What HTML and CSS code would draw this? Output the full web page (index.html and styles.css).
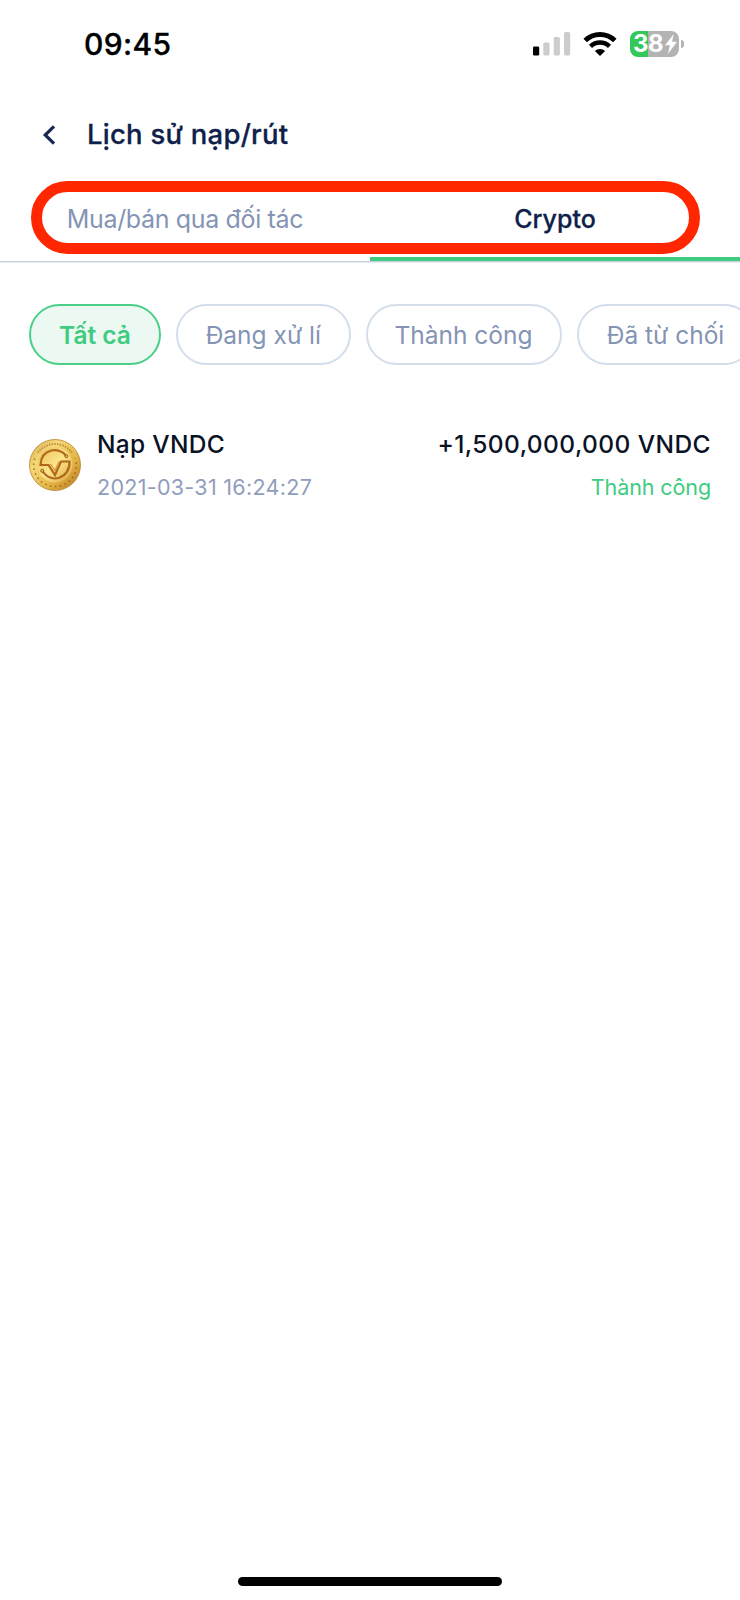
FILE: index.html
```html
<!DOCTYPE html>
<html lang="vi">
<head>
<meta charset="utf-8">
<title>Lịch sử nạp/rút</title>
<link rel="stylesheet" href="styles.css">
</head>
<body>
<div class="screen">
  <header class="status">
    <span class="time">09:45</span>
    <svg class="signal" width="38" height="24" viewBox="0 0 38 24">
      <rect x="0" y="14.500" width="6.200" height="9" rx="1.300" fill="#000"/>
      <rect x="10.300" y="10.500" width="6.200" height="13" rx="1.600" fill="#ccc"/>
      <rect x="20.700" y="5" width="6.200" height="18.500" rx="1.600" fill="#ccc"/>
      <rect x="31" y="0" width="6.200" height="23.500" rx="1.600" fill="#ccc"/>
    </svg>
    <svg class="wifi" width="34" height="24" viewBox="0 0 34 24">
      <path d="M2.200 8.500C10.500.5 23.500.5 31.800 8.500" fill="none" stroke="#000" stroke-width="5"/>
      <path d="M7.500 14.300C12.900 9.200 21.100 9.200 26.500 14.300" fill="none" stroke="#000" stroke-width="4.500"/>
      <path d="M17 24L11.900 18.900C14.700 16.200 19.300 16.200 22.100 18.900Z" fill="#000"/>
    </svg>
    <div class="battery">
      <div class="cell"><span class="pct">38</span>
        <svg class="bolt" width="12" height="20" viewBox="0 0 12 20"><path d="M8.800 0L0 11.300H5L2.800 20L12 7.800H7Z" fill="#fff"/></svg>
      </div>
      <i class="nub"></i>
    </div>
  </header>
  <div class="titlebar">
    <svg class="back" width="14" height="20" viewBox="0 0 14 20"><path d="M12 1.300L3.200 10L12 18.700" fill="none" stroke="#172751" stroke-width="3.200"/></svg>
    <h1 class="title">Lịch sử nạp/rút</h1>
  </div>
  <nav class="tabs">
    <div class="tab">Mua/bán qua đối tác</div>
    <div class="tab active">Crypto</div>
    <div class="ring"></div>
  </nav>
  <div class="pills">
    <div class="pill p1">Tất cả</div>
    <div class="pill p2">Đang xử lí</div>
    <div class="pill p3">Thành công</div>
    <div class="pill p4">Đã từ chối</div>
  </div>
  <main class="row">
    <svg class="coin" width="52" height="52" viewBox="0 0 52 52">
      <defs>
        <linearGradient id="gold" x1="0" y1="0" x2="1" y2="1">
          <stop offset="0" stop-color="#d9a548"/><stop offset=".3" stop-color="#f6da78"/><stop offset=".65" stop-color="#e3b344"/><stop offset="1" stop-color="#b3721c"/>
        </linearGradient>
        <linearGradient id="face" x1="0" y1="0" x2="1" y2="1">
          <stop offset="0" stop-color="#e9bb52"/><stop offset=".5" stop-color="#fbe58c"/><stop offset="1" stop-color="#dca23a"/>
        </linearGradient>
      </defs>
      <circle cx="26" cy="26" r="25.500" fill="url(#gold)" stroke="#b8822f" stroke-width=".8"/>
      <path d="M5.800 19.500A21.300 21.300 0 1 0 46.200 19.500" fill="none" stroke="#8d5a1a" stroke-width="1.600" stroke-dasharray="1.600 3.400" opacity=".75"/>
      <path d="M9 13.500A21.200 21.200 0 0 1 43 13.500" fill="none" stroke="#9a6824" stroke-width="2" stroke-dasharray="1.500 1.200" opacity=".6"/>
      <circle cx="26" cy="26" r="17.500" fill="url(#face)"/>
      <path d="M37 16.500C31 8 12.500 8.500 11.500 26H19.500L26 36L32 22.500H40.500C41.500 38 23 46.500 13.500 32" fill="none" stroke="#b0681a" stroke-width="2.200"/>
      <path d="M21.500 25L26 31.500L30 22.500" fill="none" stroke="#dc9a38" stroke-width="1.300"/>
      <circle cx="37.400" cy="17.200" r="1.500" fill="#e9bb52" stroke="#965a17"/>
      <circle cx="13.200" cy="31.800" r="1.500" fill="#e9bb52" stroke="#965a17"/>
    </svg>
    <div class="left"><div class="name">Nạp VNDC</div><div class="date">2021-03-31 16:24:27</div></div>
    <div class="right"><div class="amount">+1,500,000,000 VNDC</div><div class="state">Thành công</div></div>
  </main>
  <div class="home"></div>
</div>
</body>
</html>
```
FILE: styles.css
```css
* { box-sizing: border-box; }
body { margin: 0; background: #fff; font-family: Inter, "Noto Sans", sans-serif; }
.screen { width: 740px; height: 1600px; overflow: hidden; display: flex; flex-direction: column; background: #fff; white-space: nowrap; }

.status { display: flex; align-items: center; height: 88px; padding-left: 84px; flex: none; }
.time { width: 449px; font-size: 30px; font-weight: 500; line-height: 40px; letter-spacing: 0.35px; color: #000; -webkit-text-stroke: 0.3px #000; }
.signal { margin-right: 12px; }
.wifi { margin: -1px 13px 0 0; }
.battery { display: flex; align-items: center; gap: 2px; }
.cell { display: flex; align-items: center; gap: 1px; width: 49px; height: 26px; padding-left: 3px; border-radius: 8px; background: linear-gradient(90deg, #34c759 18px, #b3b3b3 18px); }
.pct { width: 31px; font-size: 24px; font-weight: 700; line-height: 26px; color: #fff; letter-spacing: -0.5px; }
.nub { width: 3px; height: 8px; border-radius: 0 4px 4px 0; background: #b3b3b3; }

.titlebar { display: flex; align-items: center; height: 92px; padding: 1px 0 0 42px; flex: none; }
.title { margin: -2px 0 0 31px; font-size: 27.500px; font-weight: 500; line-height: 40px; letter-spacing: 0.25px; color: #0f1f4b; -webkit-text-stroke: 0.3px #0f1f4b; }

.tabs { position: relative; display: grid; grid-template-columns: 1fr 1fr; height: 82px; flex: none; border-bottom: 1px solid #c5d2e2; box-shadow: 0 1px #e6edf4; }
.tab { height: 81px; font-size: 25px; line-height: 78px; letter-spacing: -0.35px; text-align: center; color: #8494b5; }
.active { font-weight: 500; letter-spacing: 0; color: #0f1f4b; -webkit-text-stroke: 0.3px #0f1f4b; border-bottom: 4px solid #40cc80; }
.ring { position: absolute; left: 31px; top: 0.500px; width: 669px; height: 73px; border: 11px solid #ff2600; border-radius: 37px; }

.pills { display: flex; gap: 15px; padding: 42px 0 0 29px; flex: none; }
.pill { flex: none; height: 61px; border: 2px solid #d3deea; border-radius: 31px; font-size: 24.500px; line-height: 58px; text-align: center; color: #8494b5; }
.p1 { width: 132px; border-color: #4bcf88; background: #ebf9f2; color: #40cc80; font-weight: 600; }
.p2 { width: 174.500px; }
.p3 { width: 196px; }
.p4 { width: 178px; }

.row { display: flex; align-items: flex-start; padding: 59px 29px 0 29px; flex: none; }
.coin { margin: 15px 16px 0 0; }
.left { flex: 1; }
.right { text-align: right; }
.name, .amount { font-size: 24.500px; font-weight: 500; line-height: 40px; color: #0a1226; }
.name { letter-spacing: 0.3px; }
.amount { letter-spacing: 0.42px; }
.date, .state { font-size: 21.500px; line-height: 46px; color: #8f9dbd; }
.date { letter-spacing: 0.3px; }
.state { color: #40cc80; letter-spacing: -0.1px; }

.home { width: 264px; height: 9px; margin: auto auto 14px; border-radius: 5px; background: #000; flex: none; }
```
